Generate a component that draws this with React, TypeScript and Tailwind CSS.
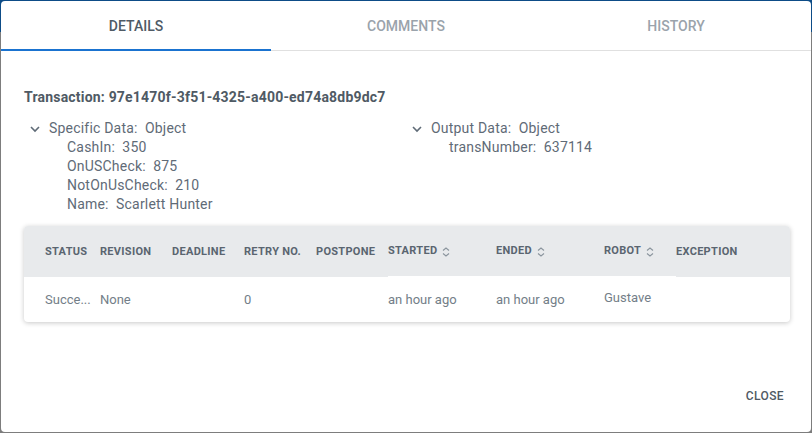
import React from 'react';

const specific = [
  { key: 'CashIn', value: '350' },
  { key: 'OnUSCheck', value: '875' },
  { key: 'NotOnUsCheck', value: '210' },
  { key: 'Name', value: 'Scarlett Hunter' },
];

const columns = [
  { label: 'STATUS', sort: false },
  { label: 'REVISION', sort: false },
  { label: 'DEADLINE', sort: false },
  { label: 'RETRY NO.', sort: false },
  { label: 'POSTPONE', sort: false },
  { label: 'STARTED', sort: true },
  { label: 'ENDED', sort: true },
  { label: 'ROBOT', sort: true },
  { label: 'EXCEPTION', sort: false },
];

const row = ['Succe...', 'None', '', '0', '', 'an hour ago', 'an hour ago', 'Gustave', ''];

function Chevron() {
  return (
    <svg width="12" height="12" viewBox="0 0 12 12" className="shrink-0">
      <path d="M2 4 L6 8 L10 4" fill="none" stroke="#5f6b77" strokeWidth="1.6" />
    </svg>
  );
}

function SortIcon() {
  return (
    <svg width="8" height="10" viewBox="0 0 8 10" className="ml-[5px]">
      <path d="M1 3.5 L4 1 L7 3.5 M1 6.5 L4 9 L7 6.5" fill="none" stroke="#8a949d" strokeWidth="1.1" />
    </svg>
  );
}

export default function App() {
  return (
    <div className="relative h-[433px] w-[812px] overflow-hidden font-['Roboto',sans-serif]">
      <div className="flex h-full flex-col">
        <div className="h-8 bg-[#0d4c87]" />
        <div className="flex-1 bg-[#7d7d7d]" />
      </div>
      <div className="absolute inset-px flex flex-col rounded-[4px] bg-white">
        <div className="flex h-[50px] border-b border-[#e0e0e0] text-sm font-medium">
          <div className="relative flex w-[270px] items-center justify-center text-[#4f5b66]">
            DETAILS
            <div className="absolute inset-x-0 -bottom-px h-[2px] bg-[#1a73d0]" />
          </div>
          <div className="flex w-[270px] items-center justify-center text-[#9aa3ab]">COMMENTS</div>
          <div className="flex flex-1 items-center justify-center text-[#9aa3ab]">HISTORY</div>
        </div>

        <div className="flex flex-1 flex-col px-[23px] pt-[36px]">
          <p className="text-sm font-bold leading-5 tracking-[0.2px] text-[#4f5a64]">
            Transaction: 97e1470f-3f51-4325-a400-ed74a8db9dc7
          </p>
          <div className="mt-[12px] grid grid-cols-[387px_1fr] text-sm leading-[19px] tracking-[0.2px] text-[#5f6b77]">
            <div>
              <div className="flex items-center gap-[8px] pl-[5px]">
                <Chevron />
                <span>Specific Data:&nbsp; Object</span>
              </div>
              {specific.map((item) => (
                <div key={item.key} className="pl-[43px]">
                  {item.key}:&nbsp; {item.value}
                </div>
              ))}
            </div>
            <div>
              <div className="flex items-center gap-[8px]">
                <Chevron />
                <span>Output Data:&nbsp; Object</span>
              </div>
              <div className="pl-[38px]">transNumber:&nbsp; 637114</div>
            </div>
          </div>

          <div className="mt-[12px] mr-[-2px] overflow-hidden rounded-[4px] bg-white shadow-[0_1px_5px_rgba(0,0,0,0.22)]">
            <div className="grid h-[51px] grid-cols-[76px_72px_72px_72px_72px_108px_108px_72px_1fr] bg-[#e8eaec] pt-px text-[11px] font-bold tracking-[0.3px] text-[#5a6570]">
              {columns.map((col, i) => (
                <div
                  key={col.label}
                  className={`flex items-center ${i === 0 ? 'pl-[21px]' : ''} ${col.sort || i === 7 ? 'border-b border-white' : ''}`}
                >
                  {col.label}
                  {col.sort && <SortIcon />}
                </div>
              ))}
            </div>
            <div className="grid h-[45px] grid-cols-[76px_72px_72px_72px_72px_108px_108px_72px_1fr] text-[13px] text-[#737e88]">
              {row.map((cell, i) => (
                <div
                  key={i}
                  className={`flex items-center ${i === 0 ? 'pl-[21px]' : ''} ${i === 7 ? 'pb-[3px]' : ''}`}
                >
                  {cell}
                </div>
              ))}
            </div>
          </div>

          <div className="mt-auto flex justify-end pb-[28px] pr-[4px]">
            <button className="text-xs font-medium tracking-[0.4px] text-[#4f5a64]">CLOSE</button>
          </div>
        </div>
      </div>
    </div>
  );
}
